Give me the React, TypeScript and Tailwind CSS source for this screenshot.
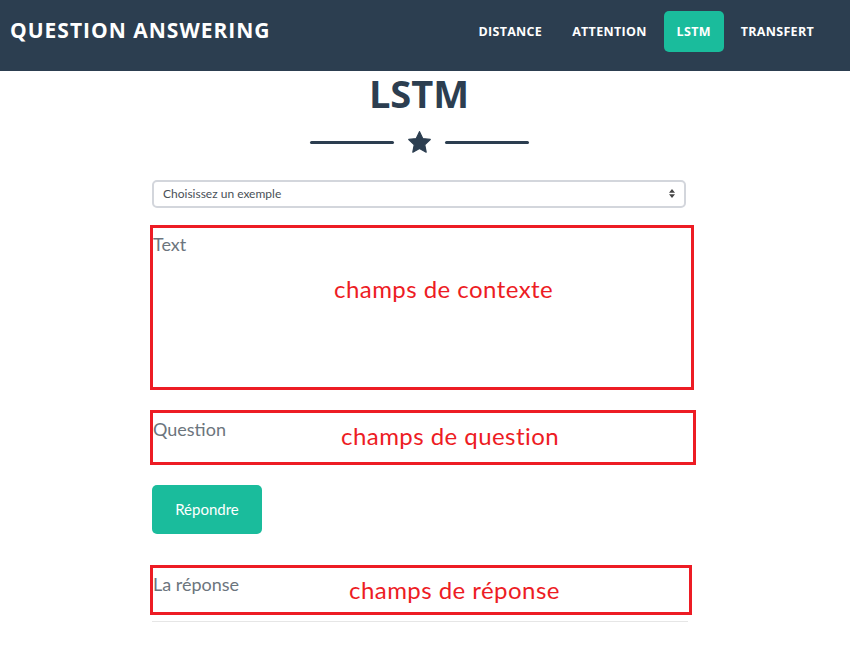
import React from 'react'

const NAV_LINKS = ['DISTANCE', 'ATTENTION', 'LSTM', 'TRANSFERT']

export default function App() {
  return (
    <div className="min-h-[655px] bg-white font-['Lato',sans-serif]">
      {/* ── Navbar ── */}
      <nav className="h-[71px] bg-[#2c3e50] flex items-start justify-between pr-[23px]">
        <div className="pl-[10px] pt-[16px] text-[21px] leading-[28px] font-bold text-white font-['Open_Sans',sans-serif] tracking-[1px]">
          QUESTION ANSWERING
        </div>
        <ul className="flex items-center gap-[4px] pt-[11px]">
          {NAV_LINKS.map(l => (
            <li key={l}>
              <a
                className={`block h-[41px] px-[13px] rounded-[5px] text-[12.5px] leading-[41px] font-bold text-white font-['Open_Sans',sans-serif] tracking-[0.3px] ${
                  l === 'LSTM' ? 'bg-[#1abc9c]' : ''
                }`}
              >
                {l}
              </a>
            </li>
          ))}
        </ul>
      </nav>

      {/* ── Content ── */}
      <main className="w-[534px] ml-[152px]">
        <h1 className="text-center text-[38px] leading-[1.2] font-bold text-[#2c3e50] font-['Open_Sans',sans-serif]">
          LSTM
        </h1>

        {/* Star divider */}
        <div className="mt-[13px] h-[25px] flex items-center justify-center">
          <div className="w-[84px] h-[3px] rounded-full bg-[#2c3e50]" />
          <svg viewBox="0 0 24 24" className="w-[25px] h-[25px] mx-[13px]" fill="#2c3e50">
            <path d="M12 1.6l3.1 6.6 7.2.9-5.3 5 1.4 7.2L12 17.8l-6.4 3.5L7 14.1l-5.3-5 7.2-.9z" strokeLinejoin="round" stroke="#2c3e50" strokeWidth={1.2} />
          </svg>
          <div className="w-[84px] h-[3px] rounded-full bg-[#2c3e50]" />
        </div>

        {/* Example select */}
        <div className="mt-[25px] h-[28px] border-2 border-[#d3d6dc] rounded-[5px] flex items-center justify-between pl-[9px] pr-[9px]">
          <span className="text-[12px] text-[#495057]">Choisissez un exemple</span>
          <svg viewBox="0 0 8 12" className="w-[6px] h-[9px]" fill="#444">
            <path d="M4 0l4 5H0z M4 12l4-5H0z" />
          </svg>
        </div>

        {/* Context field */}
        <Field height="h-[165px]" width="w-[544px]" mt="mt-[17px]" label="Text" note="champs de contexte" noteLeft="left-[181px]" noteTop="top-[47px]" />

        {/* Question field */}
        <Field height="h-[55px]" width="w-[546px]" mt="mt-[20px]" label="Question" note="champs de question" noteLeft="left-[188px]" noteTop="top-[9px]" />

        <button className="mt-[20px] w-[110px] h-[49px] rounded-[5px] bg-[#1abc9c] text-white text-[15px] leading-[49px] font-['Lato',sans-serif]">
          Répondre
        </button>

        {/* Answer field */}
        <Field height="h-[50px]" width="w-[542px]" mt="mt-[31px]" label="La réponse" note="champs de réponse" noteLeft="left-[196px]" noteTop="top-[8px]" />
        <div className="mt-[6px] h-px w-[536px] bg-[#e6e6e6]" />
      </main>
    </div>
  )
}

function Field({ height, width, mt, label, note, noteLeft, noteTop }: {
  height: string; width: string; mt: string; label: string; note: string; noteLeft: string; noteTop: string
}) {
  return (
    <div className={`relative -ml-[2px] ${mt} ${height} ${width} border-[3px] border-[#ed1c24]`}>
      <div className="pt-[6px] pl-0 text-[18px] leading-[1.2] text-[#6c757d]">{label}</div>
      <span className={`absolute ${noteLeft} ${noteTop} text-[24px] leading-[1.2] tracking-[0.45px] text-[#ed1c24] font-['Lato',sans-serif]`}>
        {note}
      </span>
    </div>
  )
}
